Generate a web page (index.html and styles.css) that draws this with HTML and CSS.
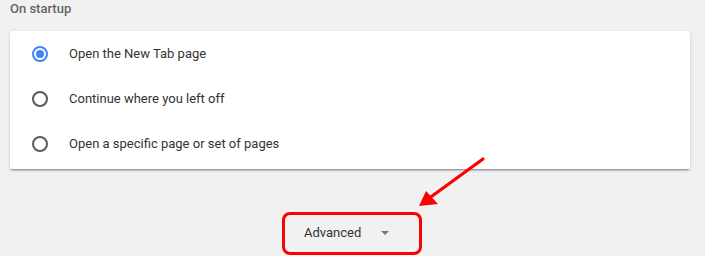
FILE: index.html
```html
<!DOCTYPE html>
<html lang="en">
  <head>
    <meta charset="UTF-8" />
    <title>Settings</title>
    <link rel="stylesheet" href="styles.css">
  </head>
  <body>
    <div class="page">
      <h2 class="section-title">On startup</h2>
      <div class="card">
        <label class="row">
          <span class="radio checked"></span>
          <span class="label">Open the New Tab page</span>
        </label>
        <label class="row">
          <span class="radio"></span>
          <span class="label">Continue where you left off</span>
        </label>
        <label class="row">
          <span class="radio"></span>
          <span class="label">Open a specific page or set of pages</span>
        </label>
      </div>
      <div class="advanced-wrap">
        <div class="highlight">
          <button class="advanced">Advanced <span class="caret"></span></button>
        </div>
      </div>
    </div>
    <svg class="pointer" width="705" height="256" viewBox="0 0 705 256">
      <line x1="483" y1="159" x2="428" y2="199" stroke="#ff0000" stroke-width="3.2" stroke-linecap="round" />
      <polygon points="419,206 426,191 438,204" fill="#ff0000" />
    </svg>
  </body>
</html>
```

FILE: styles.css
```css
* {
  margin: 0;
  padding: 0;
  box-sizing: border-box;
}
body {
  background-color: #f1f1f1;
  font-family: Roboto, "Liberation Sans", sans-serif;
  width: 705px;
  height: 256px;
  overflow: hidden;
  position: relative;
}
.page {
  padding: 0 15px 0 10px;
}
.section-title {
  font-size: 13px;
  font-weight: 500;
  color: #646464;
  line-height: 18px;
  height: 31px;
}
.card {
  background: #fff;
  border-radius: 2px;
  box-shadow: 0 2px 2px 0 rgba(0, 0, 0, 0.14), 0 1px 4px 0 rgba(0, 0, 0, 0.1), 0 3px 1px -2px rgba(0, 0, 0, 0.2);
  padding: 0 0 3px 22px;
  height: 138px;
}
.row {
  display: flex;
  align-items: center;
  height: 45px;
}
.radio {
  width: 16px;
  height: 16px;
  border: 2px solid #5a5a5a;
  border-radius: 50%;
  position: relative;
  flex-shrink: 0;
}
.radio.checked {
  border-color: #4285f4;
}
.radio.checked::after {
  content: "";
  position: absolute;
  left: 2px;
  top: 2px;
  width: 8px;
  height: 8px;
  border-radius: 50%;
  background: #4285f4;
}
.label {
  margin-left: 21px;
  font-size: 13px;
  color: #333;
}
.advanced-wrap {
  display: flex;
  justify-content: center;
  padding-top: 43px;
  padding-left: 4px;
}
.highlight {
  width: 140px;
  height: 43px;
  border: 3px solid #ff0000;
  border-radius: 8px;
  display: flex;
  align-items: center;
  padding-bottom: 2px;
}
.advanced {
  background: none;
  border: none;
  font-family: Roboto, "Liberation Sans", sans-serif;
  font-size: 13px;
  color: #333;
  padding-left: 19px;
  display: flex;
  align-items: center;
}
.caret {
  margin-left: 20px;
  width: 0;
  height: 0;
  border-left: 4px solid transparent;
  border-right: 4px solid transparent;
  border-top: 4px solid #777;
}
.pointer {
  position: absolute;
  left: 0;
  top: 0;
  pointer-events: none;
}
```
